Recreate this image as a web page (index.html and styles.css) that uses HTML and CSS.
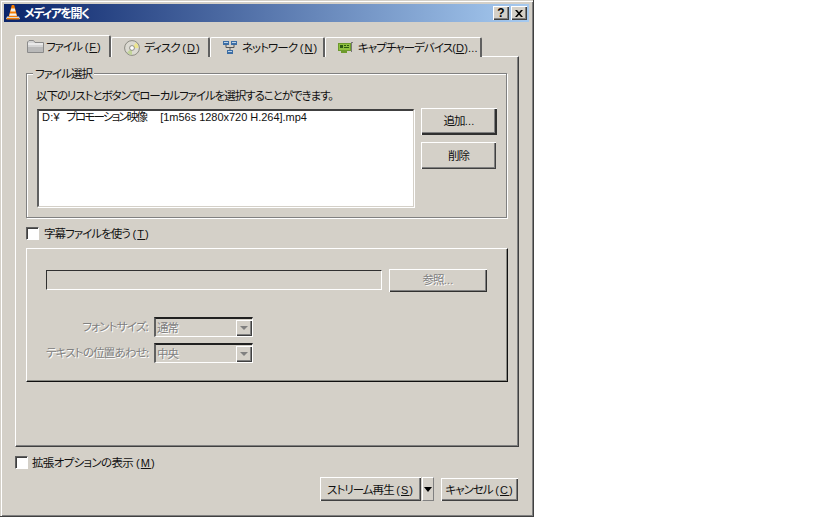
FILE: index.html
```html
<!DOCTYPE html>
<html lang="ja">
<head>
<meta charset="utf-8">
<title>メディアを開く</title>
<link rel="stylesheet" href="styles.css">
</head>
<body>
<div class="window">
  <div class="titlebar">
    <svg class="cone" width="16" height="16" viewBox="0 0 16 16">
      <path d="M1 15 L2 12.5 H14 L15 15 Z" fill="#d8d8d8"/>
      <path d="M2 14 H14 L14.6 15.5 H1.4 Z" fill="#ef7f0a"/>
      <path d="M6.8 1 H9.2 L12.4 13 H3.6 Z" fill="#f57c00"/>
      <path d="M6.2 4.6 H9.8 L10.6 7.4 H5.4 Z" fill="#f3f1ec"/>
      <path d="M4.9 9.4 H11.1 L11.8 11.8 H4.2 Z" fill="#f3f1ec"/>
    </svg>
    <span class="title-text">メディアを開く</span>
    <span class="caption-btn help">?</span>
    <span class="caption-btn close">
      <svg width="8" height="7" viewBox="0 0 8 7"><path d="M0 0h2l2 2.2L6 0h2L5 3.5 8 7H6L4 4.8 2 7H0l3-3.5z" fill="#000"/></svg>
    </span>
  </div>
  <div class="content">
    <div class="tabs">
      <div class="tab active">
        <svg class="icon folder" width="17" height="13" viewBox="0 0 17 13"><path d="M.5 3V2L2 .5h4.500L8 2.500h8.500v10H.5z" fill="#d4d4d4" stroke="#8a8a8a"/><path d="M1 7h15v5H1z" fill="#b9b9b9"/><path d="M1 3.500h15v1H1z" fill="#fff"/></svg>
        <span class="tab-label">ファイル <span class="mn">(<u>F</u>)</span></span>
      </div>
      <div class="tab t2">
        <svg class="icon" width="16" height="16" viewBox="0 0 16 16"><circle cx="8" cy="8" r="7.400" fill="#dcdad2" stroke="#77776e" stroke-width=".8"/><path d="M8 8 L12 2.500 A7 7 0 0 1 14.500 8 Z" fill="#ece58f"/><path d="M8 8 L3 12.500 A7 7 0 0 0 8 15 Z" fill="#c3d59a"/><circle cx="8" cy="8" r="2.400" fill="#fff" stroke="#77776e" stroke-width=".8"/></svg>
        <span class="tab-label">ディスク <span class="mn">(<u>D</u>)</span></span>
      </div>
      <div class="tab t3">
        <svg class="icon" width="16" height="14" viewBox="0 0 16 14"><path d="M4 4v2.500h8V4M8 6.500V9" fill="none" stroke="#555"/><rect x="1" y="0" width="6" height="4" fill="#3d6ea5"/><rect x="9" y="0" width="6" height="4" fill="#3d6ea5"/><rect x="5" y="9" width="6" height="4" fill="#3d6ea5"/><path d="M2 1h4v1H2zM10 1h4v1h-4zM6 10h4v1H6z" fill="#bcd3e8"/></svg>
        <span class="tab-label">ネットワーク <span class="mn">(<u>N</u>)</span></span>
      </div>
      <div class="tab t4">
        <svg class="icon" width="16" height="14" viewBox="0 0 16 14"><path d="M0 2h13v8H9v2H3v-2H0z" fill="#6d9a2c"/><path d="M1 3h11v6H1z" fill="#8fc03f"/><path d="M2 4h3v3H2zM6 4h2v1H6zM9 4h2v1H9zM6 6h5v1H6z" fill="#2c5a12"/><path d="M13 1h2v1h-1v9h-1z" fill="#777"/></svg>
        <span class="tab-label">キャプチャーデバイス<span class="lat">(<u>D</u>)...</span></span>
      </div>
    </div>
    <div class="panel">
      <div class="group">
        <span class="legend">ファイル選択</span>
        <p class="hint">以下のリストとボタンでローカルファイルを選択することができます。</p>
        <div class="file-row">
          <div class="list"><span class="lat">D:¥  </span><span class="clip-name">プロモーション映像</span><span class="lat path">[1m56s 1280x720 H.264].mp4</span></div>
          <div class="side">
            <div class="btn default-btn"><span>追加<span class="lat">...</span></span></div>
            <div class="btn plain-btn"><span>削除</span></div>
          </div>
        </div>
      </div>
      <label class="check sub-check"><span class="box"></span><span class="check-text">字幕ファイルを使う <span class="mn">(<u>T</u>)</span></span></label>
      <div class="subgroup">
        <div class="sub-row">
          <div class="sub-input"></div>
          <div class="btn browse disabled"><span>参照<span class="lat">...</span></span></div>
        </div>
        <div class="form-row first">
          <span class="form-label disabled">フォントサイズ:</span>
          <div class="combo"><span class="disabled">通常</span><span class="arrow"><i></i></span></div>
        </div>
        <div class="form-row">
          <span class="form-label disabled">テキストの位置あわせ:</span>
          <div class="combo"><span class="disabled">中央</span><span class="arrow"><i></i></span></div>
        </div>
      </div>
    </div>
    <label class="check ext-check"><span class="box"></span><span class="ext-text">拡張オプションの表示 <span class="mn">(<u>M</u>)</span></span></label>
    <div class="footer">
      <div class="btn stream"><span>ストリーム再生 <span class="mn">(<u>S</u>)</span></span></div>
      <div class="drop"><i></i></div>
      <div class="btn cancel"><span>キャンセル <span class="mn">(<u>C</u>)</span></span></div>
    </div>
  </div>
</div>
</body>
</html>
```
FILE: styles.css
```css
* { box-sizing: border-box; }
html, body { margin: 0; padding: 0; background: #fff; }
body {
  font-family: "Noto Sans CJK JP", "Liberation Sans", sans-serif;
  font-size: 11.5px;
  line-height: 12px;
  letter-spacing: -0.95px;
  color: #111;
  font-feature-settings: "palt";
}
u { text-decoration: underline; text-underline-offset: 1px; }
.lat { font-family: "Liberation Sans", sans-serif; font-size: 11px; letter-spacing: 0.2px; }
.lat.path { letter-spacing: -0.03px; }
.mn { font-family: "Liberation Sans", sans-serif; font-size: 11px; letter-spacing: 1px; margin-left: 1px; }
.clip-name { letter-spacing: -1.8px; margin-right: 14px; }

.window {
  width: 534px;
  height: 517px;
  padding: 4px;
  background: #d4d0c8;
  border-right: 1px solid #404040;
  border-bottom: 1px solid #404040;
  box-shadow: inset 1px 1px 0 #d4d0c8, inset 2px 2px 0 #fff, inset -1px -1px 0 #808080;
}
.titlebar {
  height: 18px;
  width: 525px;
  display: flex;
  align-items: center;
  padding: 0 2px 0 1px;
  background: linear-gradient(90deg, #0a246a, #a6caf0);
  color: #fff;
}
.cone { margin-right: 3px; margin-top: -2px; flex: none; }
.title-text { font-weight: 700; flex: 1; font-size: 12px; letter-spacing: -1.4px; }
.caption-btn {
  width: 16px;
  height: 14px;
  display: flex;
  align-items: center;
  justify-content: center;
  background: #d4d0c8;
  color: #000;
  font: 700 12px "Liberation Sans", sans-serif;
  letter-spacing: 0;
  box-shadow: inset 1px 1px 0 #fff, inset -1px -1px 0 #404040, inset -2px -2px 0 #808080;
}
.help { margin-right: 2px; }

.content { padding: 13px 0 0 11px; }
.tabs { display: flex; align-items: flex-end; height: 22px; position: relative; z-index: 1; margin-bottom: -1px; }
.tab {
  height: 20px;
  display: flex;
  align-items: center;
  background: #d4d0c8;
  border-top: 1px solid #fff;
  border-left: 1px solid #fff;
  border-right: 2px solid #606060;
  border-top-left-radius: 2px;
  border-top-right-radius: 2px;
  padding: 0 0 0 12px;
  gap: 4px;
}
.icon { flex: none; }
.folder { margin-right: -2px; }
.tab.active { height: 22px; width: 96px; padding-left: 11px; }
.t2 { width: 99px; padding-left: 12px; }
.t3 { width: 115px; padding-left: 11px; }
.t4 { width: 157px; padding-left: 12px; }
.tab-label { white-space: nowrap; }

.panel {
  width: 504px;
  height: 391px;
  padding: 16px 0 0 10px;
  background: #d4d0c8;
  border-top: 1px solid #fff;
  border-left: 1px solid #fff;
  border-right: 1px solid #404040;
  border-bottom: 1px solid #404040;
  box-shadow: inset -1px -1px 0 #808080;
}
.group {
  position: relative;
  width: 481px;
  height: 145px;
  padding: 15px 0 0 10px;
  border: 1px solid #808080;
  box-shadow: 1px 1px 0 #fff, inset 1px 1px 0 #fff;
}
.legend {
  position: absolute;
  left: 6px;
  top: -7px;
  padding: 0 2px;
  background: #d4d0c8;
}
.hint { margin: 0 0 0 -1px; height: 20px; white-space: nowrap; letter-spacing: -1.05px; }
.file-row { display: flex; gap: 7px; align-items: flex-start; }
.list {
  width: 377px;
  height: 98px;
  padding: 0 3px;
  background: #fff;
  white-space: pre;
  line-height: 10px;
  border-top: 2px solid #404040;
  border-left: 2px solid #606060;
  border-right: 1px solid #d4d0c8;
  border-bottom: 1px solid #d4d0c8;
  box-shadow: 1px 1px 0 #fff;
}
.side { display: flex; flex-direction: column; gap: 7px; margin-top: -1px; }
.btn {
  display: flex;
  align-items: center;
  justify-content: center;
  background: #d4d0c8;
  white-space: nowrap;
  box-shadow: inset 1px 1px 0 #fff, inset -1px -1px 0 #404040, inset -2px -2px 0 #808080;
}
.default-btn {
  width: 76px;
  height: 27px;
  padding-bottom: 2px;
  box-shadow: inset 1px 1px 0 #fff, inset -2px -2px 0 #303030, inset -3px -3px 0 #808080;
}
.plain-btn { width: 75px; height: 27px; padding-bottom: 1px; }

.check { display: flex; align-items: center; height: 13px; }
.check-text { height: 14px; }
.ext-text { letter-spacing: -0.65px; }
.box {
  width: 13px;
  height: 13px;
  flex: none;
  background: #fff;
  border-top: 1px solid #606060;
  border-left: 1px solid #606060;
  border-right: 1px solid #fff;
  border-bottom: 1px solid #fff;
  box-shadow: inset 1px 1px 0 #404040;
}
.sub-check { margin: 9px 0 8px; gap: 5px; }
.subgroup {
  width: 482px;
  height: 134px;
  padding: 20px 0 0 19px;
  border-top: 1px solid #fff;
  border-left: 1px solid #fff;
  border-right: 1px solid #101010;
  border-bottom: 1px solid #101010;
  box-shadow: inset -1px -1px 0 #8a8a84;
}
.sub-row { display: flex; gap: 7px; height: 23px; }
.sub-input {
  width: 336px;
  height: 20px;
  margin-top: 1px;
  border-top: 1px solid #303030;
  border-left: 1px solid #303030;
  border-right: 1px solid #fff;
  border-bottom: 1px solid #fff;
}
.browse {
  width: 98px;
  height: 23px;
  padding-bottom: 2px;
  box-shadow: inset 1px 1px 0 #fff, inset -1px -1px 0 #303030, inset -2px -2px 0 #808080;
}
.disabled { color: #808080; text-shadow: 1px 1px 0 #fff; }
.form-row { display: flex; align-items: center; margin-top: 6px; height: 20px; }
.form-row.first { margin-top: 25px; }
.form-label { width: 102px; height: 14px; text-align: right; white-space: nowrap; flex: none; margin-right: 6px; letter-spacing: -0.8px; }
.combo {
  width: 99px;
  height: 20px;
  display: flex;
  align-items: center;
  justify-content: space-between;
  padding-left: 1px;
  border-top: 2px solid #202020;
  border-left: 2px solid #606060;
  border-right: 1px solid #fff;
  border-bottom: 1px solid #fff;
}
.combo .disabled { height: 14px; }
.arrow {
  width: 16px;
  height: 16px;
  display: flex;
  align-items: center;
  justify-content: center;
  background: #d4d0c8;
  box-shadow: inset 1px 1px 0 #fff, inset -1px -1px 0 #404040, inset -2px -2px 0 #808080;
}
.arrow i {
  border-left: 4px solid transparent;
  border-right: 4px solid transparent;
  border-top: 4px solid #808080;
}
.ext-check { margin: 9px 0 0; gap: 4px; }
.footer { display: flex; width: 503px; margin-top: 8px; justify-content: flex-end; align-items: flex-start; }
.stream { width: 101px; height: 24px; }
.drop {
  width: 12px;
  height: 24px;
  margin: 0 7px 0 1px;
  display: flex;
  align-items: center;
  justify-content: center;
  border-top: 1px solid #fff;
  border-left: 1px solid #fff;
  border-right: 1px solid #808080;
  border-bottom: 1px solid #808080;
}
.drop i {
  border-left: 4px solid transparent;
  border-right: 4px solid transparent;
  border-top: 5px solid #000;
}
.cancel { width: 77px; height: 23px; margin-top: 1px; }
```
